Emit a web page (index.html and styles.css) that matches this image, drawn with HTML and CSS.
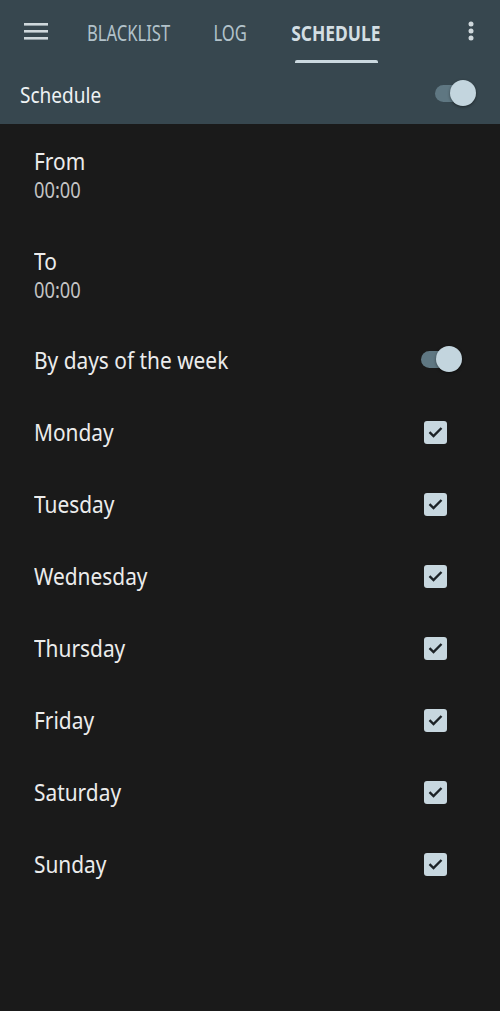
FILE: index.html
```html
<!DOCTYPE html>
<html>
<head>
<meta charset="utf-8">
<link rel="stylesheet" href="styles.css">
</head>
<body>
<div class="appbar">
  <div class="tabbar">
    <div class="menu">
      <svg width="24" height="18" viewBox="0 0 24 18"><rect x="0" y="1" width="24" height="2.6" fill="#cfd8dc"/><rect x="0" y="8" width="24" height="2.6" fill="#cfd8dc"/><rect x="0" y="15" width="24" height="2.6" fill="#cfd8dc"/></svg>
    </div>
    <div class="tab tab-1"><span>BLACKLIST</span></div>
    <div class="tab tab-2"><span>LOG</span></div>
    <div class="tab tab-3 active"><span>SCHEDULE</span><i class="indicator"></i></div>
    <div class="more">
      <svg width="6" height="20" viewBox="0 0 6 20"><circle cx="3" cy="3" r="2.5" fill="#cfd8dc"/><circle cx="3" cy="10" r="2.5" fill="#cfd8dc"/><circle cx="3" cy="17" r="2.5" fill="#cfd8dc"/></svg>
    </div>
  </div>
  <div class="subbar">
    <span class="subtitle">Schedule</span>
    <div class="switch"><div class="track"></div><div class="thumb"></div></div>
  </div>
</div>
<div class="list">
  <div class="item two">
    <div class="title">From</div>
    <div class="summary">00:00</div>
  </div>
  <div class="item two">
    <div class="title">To</div>
    <div class="summary">00:00</div>
  </div>
  <div class="item one">
    <div class="title">By days of the week</div>
    <div class="switch switch-row"><div class="track"></div><div class="thumb"></div></div>
  </div>
  <div class="item one"><div class="title">Monday</div><span class="check"><svg width="15" height="12" viewBox="0 0 15 12"><path d="M1.5 6.2 L5.5 10 L13.5 2" fill="none" stroke="#1c2226" stroke-width="2.4"/></svg></span></div>
  <div class="item one"><div class="title">Tuesday</div><span class="check"><svg width="15" height="12" viewBox="0 0 15 12"><path d="M1.5 6.2 L5.5 10 L13.5 2" fill="none" stroke="#1c2226" stroke-width="2.4"/></svg></span></div>
  <div class="item one"><div class="title">Wednesday</div><span class="check"><svg width="15" height="12" viewBox="0 0 15 12"><path d="M1.5 6.2 L5.5 10 L13.5 2" fill="none" stroke="#1c2226" stroke-width="2.4"/></svg></span></div>
  <div class="item one"><div class="title">Thursday</div><span class="check"><svg width="15" height="12" viewBox="0 0 15 12"><path d="M1.5 6.2 L5.5 10 L13.5 2" fill="none" stroke="#1c2226" stroke-width="2.4"/></svg></span></div>
  <div class="item one"><div class="title">Friday</div><span class="check"><svg width="15" height="12" viewBox="0 0 15 12"><path d="M1.5 6.2 L5.5 10 L13.5 2" fill="none" stroke="#1c2226" stroke-width="2.4"/></svg></span></div>
  <div class="item one"><div class="title">Saturday</div><span class="check"><svg width="15" height="12" viewBox="0 0 15 12"><path d="M1.5 6.2 L5.5 10 L13.5 2" fill="none" stroke="#1c2226" stroke-width="2.4"/></svg></span></div>
  <div class="item one"><div class="title">Sunday</div><span class="check"><svg width="15" height="12" viewBox="0 0 15 12"><path d="M1.5 6.2 L5.5 10 L13.5 2" fill="none" stroke="#1c2226" stroke-width="2.4"/></svg></span></div>
</div>
</body>
</html>
```

FILE: styles.css
```css
html, body {
  margin: 0;
  padding: 0;
  background: #1a1a1a;
  font-family: "Noto Sans", "DejaVu Sans", sans-serif;
  color: #ececec;
}
body {
  width: 500px;
  height: 1011px;
  overflow: hidden;
}
.appbar {
  background: #37474f;
}
.tabbar {
  height: 64px;
  display: flex;
  align-items: stretch;
}
.menu {
  width: 72px;
  padding-left: 24px;
  box-sizing: border-box;
  display: flex;
  align-items: center;
  padding-bottom: 2px;
}
.menu svg { display: block; }
.tab {
  position: relative;
  display: flex;
  align-items: center;
  justify-content: center;
  font-size: 21px;
  line-height: 28px;
  color: #b2c2ca;
  padding-top: 2px;
  box-sizing: border-box;
}
.tab span {
  display: inline-block;
  transform: scaleX(0.79);
  white-space: nowrap;
}
.tab-1 { width: 114px; }
.tab-2 { width: 89px; }
.tab-3 { width: 122px; }
.tab.active {
  color: #d3dee3;
  font-weight: 700;
}
.tab.active span { transform: scaleX(0.83); }
.indicator {
  position: absolute;
  left: 20px;
  right: 19px;
  bottom: 1px;
  height: 3px;
  border-radius: 2px 2px 0 0;
  background: #cbd9e0;
}
.more {
  flex: 1;
  display: flex;
  align-items: center;
  justify-content: flex-end;
  padding-right: 26px;
  padding-bottom: 2px;
}
.more svg { display: block; }
.subbar {
  height: 60px;
  display: flex;
  align-items: center;
  justify-content: space-between;
  padding: 0 24px 0 20px;
}
.subtitle {
  font-size: 22px;
  line-height: 28px;
  color: #eef2f4;
  transform: scaleX(0.865);
  transform-origin: left center;
  display: inline-block;
}
.switch {
  position: relative;
  width: 42px;
  height: 26px;
}
.switch .track {
  position: absolute;
  left: 1px;
  top: 4px;
  width: 36px;
  height: 17px;
  border-radius: 9px;
  background: #5f7782;
}
.switch .thumb {
  position: absolute;
  right: 0;
  top: -1px;
  width: 26px;
  height: 26px;
  border-radius: 50%;
  background: #c3d5de;
  box-shadow: 0 1px 3px rgba(0,0,0,0.45);
}
.list {
  padding-left: 34px;
  padding-right: 53px;
}
.item {
  display: flex;
  box-sizing: border-box;
}
.item.two {
  height: 100px;
  flex-direction: column;
  justify-content: center;
  padding-top: 3px;
}
.item.one {
  height: 72px;
  align-items: center;
  justify-content: space-between;
}
.title {
  font-size: 24px;
  line-height: 28px;
  color: #ececec;
  transform: scaleX(0.87);
  transform-origin: left center;
  white-space: nowrap;
}
.summary {
  font-size: 21px;
  line-height: 30px;
  color: #c4c4c4;
  transform: scaleX(0.87);
  transform-origin: left center;
}
.switch-row {
  margin-right: -15px;
  margin-top: -1px;
}
.check {
  width: 23px;
  height: 23px;
  border-radius: 3px;
  background: #c7d7df;
  display: flex;
  align-items: center;
  justify-content: center;
}
.check svg { display: block; }
```
